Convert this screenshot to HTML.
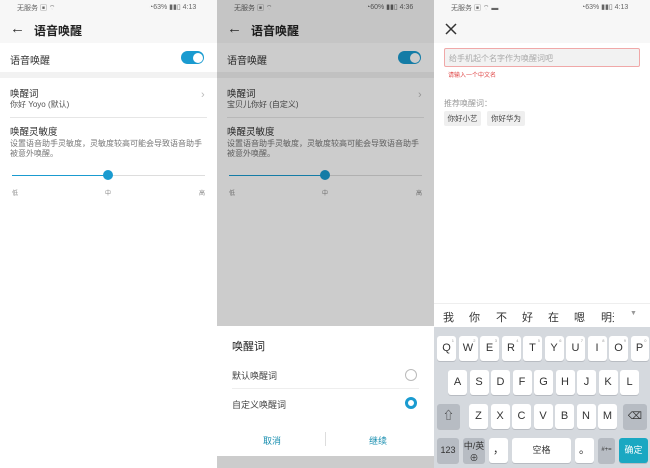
<!DOCTYPE html>
<html><head><meta charset="utf-8"><style>
*{margin:0;padding:0;box-sizing:border-box}
body{width:650px;height:468px;overflow:hidden;background:#fff;font-family:"Liberation Sans","Noto Sans CJK SC",sans-serif;position:relative}
.p{position:absolute;top:0;width:217px;height:468px;background:#fff;overflow:hidden}
.a{position:absolute;white-space:nowrap}
.sb{font-size:7px;color:#666;top:3px}
.hd{position:absolute;left:0;top:0;width:100%;height:43px;background:#f7f7f7}
.gap{position:absolute;left:0;top:72px;width:100%;height:6px;background:#f2f2f2}
.k{position:absolute;background:#fff;border-radius:3px;font-size:11px;color:#333;text-align:center;line-height:25px;box-shadow:0 1px 0 #b8bcc2}
.k i{position:absolute;top:-8px;right:2px;font-size:4px;color:#999;font-style:normal}
.g{background:#b7bcc3}
</style></head><body>

<!-- LEFT -->
<div class="p" style="left:0">
 <div class="hd"></div>
 <div class="a sb" style="left:17px">无服务 ▣ ⌔</div>
 <div class="a sb" style="left:149px">◔63% ▮▮▯ 4:13</div>
 <div class="a" style="left:10px;top:20px;font-size:15px;color:#333">←</div>
 <div class="a" style="left:34px;top:22px;font-size:12px;font-weight:bold;color:#222">语音唤醒</div>
 <div class="a" style="left:10px;top:52px;font-size:10px;color:#333">语音唤醒</div>
 <div class="a" style="left:181px;top:51px;width:23px;height:13px;border-radius:7px;background:#1a9bd0"><div style="position:absolute;right:1.5px;top:1.5px;width:10px;height:10px;border-radius:50%;background:#fff"></div></div>
 <div class="gap"></div>
 <div class="a" style="left:10px;top:86px;font-size:9.5px;color:#333">唤醒词</div>
 <div class="a" style="left:10px;top:99px;font-size:8px;color:#555">你好 Yoyo (默认)</div>
 <div class="a" style="left:201px;top:89px;font-size:11px;color:#bbb">›</div>
 <div class="a" style="left:10px;top:117px;width:197px;height:1px;background:#e6e6e6"></div>
 <div class="a" style="left:10px;top:124px;font-size:9.5px;color:#333">唤醒灵敏度</div>
 <div class="a" style="left:10px;top:139px;font-size:8px;color:#777;line-height:10px;white-space:normal;width:198px">设置语音助手灵敏度，灵敏度较高可能会导致语音助手被意外唤醒。</div>
 <div class="a" style="left:12px;top:175px;width:193px;height:1px;background:#ddd"></div>
 <div class="a" style="left:12px;top:174.5px;width:96px;height:1.5px;background:#1a9bd0"></div>
 <div class="a" style="left:103px;top:170px;width:10px;height:10px;border-radius:50%;background:#1a9bd0"></div>
 <div class="a" style="left:12px;top:188px;font-size:6px;color:#888">低</div>
 <div class="a" style="left:105px;top:188px;font-size:6px;color:#888">中</div>
 <div class="a" style="left:199px;top:188px;font-size:6px;color:#888">高</div>
</div>

<!-- MIDDLE -->
<div class="p" style="left:217px">
 <div class="hd"></div>
 <div class="a sb" style="left:17px">无服务 ▣ ⌔</div>
 <div class="a sb" style="left:149px">◔60% ▮▮▯ 4:36</div>
 <div class="a" style="left:10px;top:20px;font-size:15px;color:#333">←</div>
 <div class="a" style="left:34px;top:22px;font-size:12px;font-weight:bold;color:#222">语音唤醒</div>
 <div class="a" style="left:10px;top:52px;font-size:10px;color:#333">语音唤醒</div>
 <div class="a" style="left:181px;top:51px;width:23px;height:13px;border-radius:7px;background:#1a9bd0"><div style="position:absolute;right:1.5px;top:1.5px;width:10px;height:10px;border-radius:50%;background:#fff"></div></div>
 <div class="gap"></div>
 <div class="a" style="left:10px;top:86px;font-size:9.5px;color:#333">唤醒词</div>
 <div class="a" style="left:10px;top:99px;font-size:8px;color:#555">宝贝儿你好 (自定义)</div>
 <div class="a" style="left:201px;top:89px;font-size:11px;color:#bbb">›</div>
 <div class="a" style="left:10px;top:117px;width:197px;height:1px;background:#e6e6e6"></div>
 <div class="a" style="left:10px;top:124px;font-size:9.5px;color:#333">唤醒灵敏度</div>
 <div class="a" style="left:10px;top:139px;font-size:8px;color:#777;line-height:10px;white-space:normal;width:198px">设置语音助手灵敏度，灵敏度较高可能会导致语音助手被意外唤醒。</div>
 <div class="a" style="left:12px;top:175px;width:193px;height:1px;background:#ddd"></div>
 <div class="a" style="left:12px;top:174.5px;width:96px;height:1.5px;background:#1a9bd0"></div>
 <div class="a" style="left:103px;top:170px;width:10px;height:10px;border-radius:50%;background:#1a9bd0"></div>
 <div class="a" style="left:12px;top:188px;font-size:6px;color:#888">低</div>
 <div class="a" style="left:105px;top:188px;font-size:6px;color:#888">中</div>
 <div class="a" style="left:199px;top:188px;font-size:6px;color:#888">高</div>
 <div class="a" style="left:0;top:0;width:217px;height:468px;background:rgba(0,0,0,0.2)"></div>
 <div class="a" style="left:0;top:326px;width:217px;height:130px;background:#fff"></div>
 <div class="a" style="left:15px;top:338px;font-size:11px;color:#222">唤醒词</div>
 <div class="a" style="left:15px;top:369px;font-size:9px;color:#444">默认唤醒词</div>
 <div class="a" style="left:188px;top:369px;width:12px;height:12px;border-radius:50%;border:1px solid #bbb"></div>
 <div class="a" style="left:15px;top:388px;width:187px;height:1px;background:#eee"></div>
 <div class="a" style="left:15px;top:398px;font-size:9px;color:#444">自定义唤醒词</div>
 <div class="a" style="left:188px;top:397px;width:12px;height:12px;border-radius:50%;border:3.5px solid #1a9bd0"></div>
 <div class="a" style="left:46px;top:434px;font-size:9px;color:#1a8fb0">取消</div>
 <div class="a" style="left:108px;top:432px;width:1px;height:14px;background:#ddd"></div>
 <div class="a" style="left:152px;top:434px;font-size:9px;color:#1a8fb0">继续</div>
</div>

<!-- RIGHT -->
<div class="p" style="left:434px;width:216px">
 <div class="hd"></div>
 <div class="a sb" style="left:17px">无服务 ▣ ⌔ ▬</div>
 <div class="a sb" style="left:147px">◔63% ▮▮▯ 4:13</div>
 <svg class="a" style="left:11px;top:23px" width="12" height="12"><path d="M1 1L11 11M11 1L1 11" stroke="#333" stroke-width="1.5"/></svg>
 <div class="a" style="left:10px;top:48px;width:196px;height:19px;border:1px solid #f0a8a8;border-radius:2px;background:#f2f2f2"></div>
 <div class="a" style="left:15px;top:53px;font-size:8px;color:#aaa">给手机起个名字作为唤醒词吧</div>
 <div class="a" style="left:14px;top:70px;font-size:6px;color:#e04848">请输入一个中文名</div>
 <div class="a" style="left:10px;top:98px;font-size:8px;color:#999">推荐唤醒词：</div>
 <div class="a" style="left:10px;top:111px;width:37px;height:15px;background:#efefef;border-radius:2px;font-size:7.5px;color:#444;text-align:center;line-height:15px">你好小艺</div>
 <div class="a" style="left:53px;top:111px;width:38px;height:15px;background:#efefef;border-radius:2px;font-size:7.5px;color:#444;text-align:center;line-height:15px">你好华为</div>
 <div class="a" style="left:0;top:303px;width:216px;height:1px;background:#eee"></div>
 <div class="a" style="left:0;top:309px;font-size:11px;color:#333;word-spacing:0">
  <span class="a" style="left:9px">我</span><span class="a" style="left:35px">你</span><span class="a" style="left:62px">不</span><span class="a" style="left:88px">好</span><span class="a" style="left:114px">在</span><span class="a" style="left:140px">嗯</span><span class="a" style="left:167px">明天</span>
 </div>
 <div class="a" style="left:180px;top:305px;width:14px;height:20px;background:#fff"></div>
 <div class="a" style="left:196px;top:310px;font-size:7px;color:#999">▼</div>
 <div class="a" style="left:0;top:327px;width:216px;height:141px;background:#d5d9de"></div>
 <div class="k" style="left:3px;top:336px;width:19px;height:25px">Q<i>1</i></div>
 <div class="k" style="left:24.5px;top:336px;width:19px;height:25px">W<i>2</i></div>
 <div class="k" style="left:46px;top:336px;width:19px;height:25px">E<i>3</i></div>
 <div class="k" style="left:67.5px;top:336px;width:19px;height:25px">R<i>4</i></div>
 <div class="k" style="left:89px;top:336px;width:19px;height:25px">T<i>5</i></div>
 <div class="k" style="left:110.5px;top:336px;width:19px;height:25px">Y<i>6</i></div>
 <div class="k" style="left:132px;top:336px;width:19px;height:25px">U<i>7</i></div>
 <div class="k" style="left:153.5px;top:336px;width:19px;height:25px">I<i>8</i></div>
 <div class="k" style="left:175px;top:336px;width:19px;height:25px">O<i>9</i></div>
 <div class="k" style="left:196.5px;top:336px;width:18px;height:25px">P<i>0</i></div>
 <div class="k" style="left:14px;top:370px;width:19px;height:25px">A</div>
 <div class="k" style="left:35.5px;top:370px;width:19px;height:25px">S</div>
 <div class="k" style="left:57px;top:370px;width:19px;height:25px">D</div>
 <div class="k" style="left:78.5px;top:370px;width:19px;height:25px">F</div>
 <div class="k" style="left:100px;top:370px;width:19px;height:25px">G</div>
 <div class="k" style="left:121.5px;top:370px;width:19px;height:25px">H</div>
 <div class="k" style="left:143px;top:370px;width:19px;height:25px">J</div>
 <div class="k" style="left:164.5px;top:370px;width:19px;height:25px">K</div>
 <div class="k" style="left:186px;top:370px;width:19px;height:25px">L</div>
 <div class="k g" style="left:3px;top:404px;width:23px;height:25px">⇧</div>
 <div class="k" style="left:35px;top:404px;width:19px;height:25px">Z</div>
 <div class="k" style="left:56.5px;top:404px;width:19px;height:25px">X</div>
 <div class="k" style="left:78px;top:404px;width:19px;height:25px">C</div>
 <div class="k" style="left:99.5px;top:404px;width:19px;height:25px">V</div>
 <div class="k" style="left:121px;top:404px;width:19px;height:25px">B</div>
 <div class="k" style="left:142.5px;top:404px;width:19px;height:25px">N</div>
 <div class="k" style="left:164px;top:404px;width:19px;height:25px">M</div>
 <div class="k g" style="left:189px;top:404px;width:24px;height:25px;font-size:10px">⌫</div>
 <div class="k g" style="left:3px;top:438px;width:22px;height:25px;font-size:9px">123</div>
 <div class="k g" style="left:29px;top:438px;width:22px;height:25px;font-size:9px;line-height:12px;padding-top:2px">中/英<br>⊕</div>
 <div class="k" style="left:55px;top:438px;width:19px;height:25px">，</div>
 <div class="k" style="left:78px;top:438px;width:59px;height:25px;font-size:9px">空格</div>
 <div class="k" style="left:141px;top:438px;width:19px;height:25px">。</div>
 <div class="k g" style="left:164px;top:438px;width:17px;height:25px;font-size:6px">#+=</div>
 <div class="k" style="left:185px;top:438px;width:29px;height:25px;background:#1aa8c2;color:#fff;font-size:9px">确定</div>
</div>
</body></html>
